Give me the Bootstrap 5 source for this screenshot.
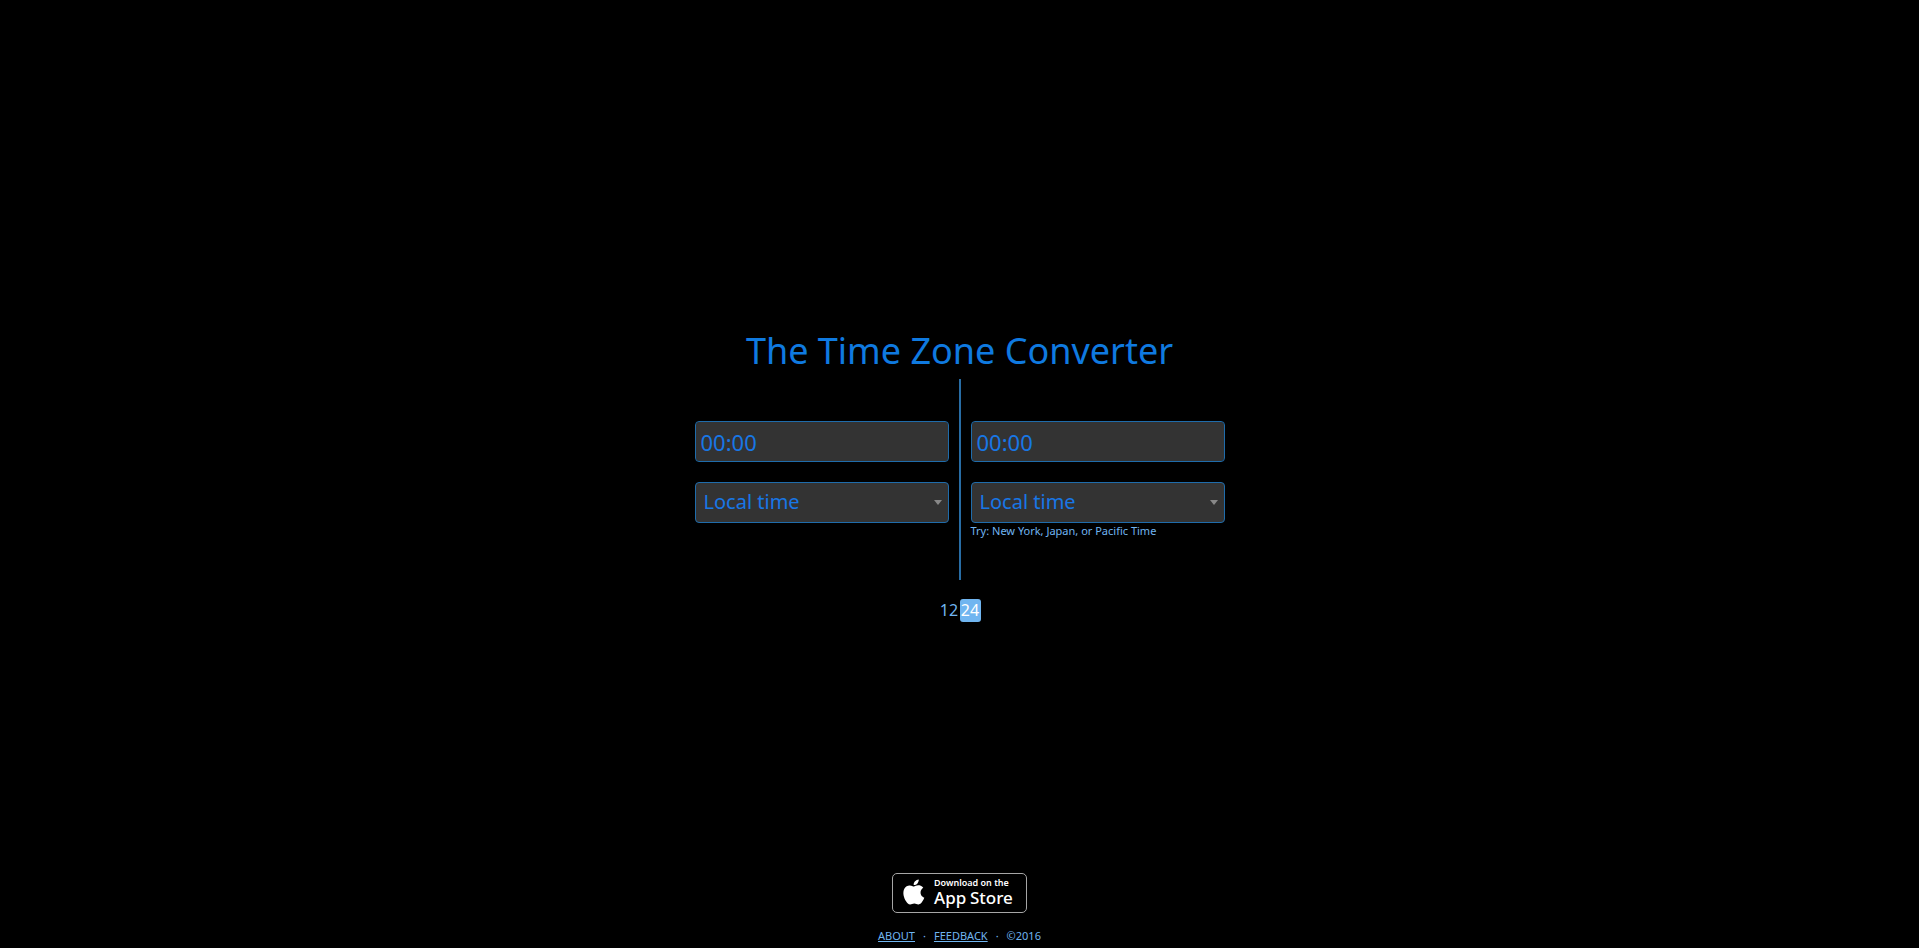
<!DOCTYPE html>
<html lang="en">
<head>
<meta charset="utf-8">
<meta name="viewport" content="width=device-width, initial-scale=1">
<title>The Time Zone Converter</title>
<link rel="stylesheet" href="https://cdn.jsdelivr.net/npm/bootstrap@5.3.0/dist/css/bootstrap.min.css">
<style>
  body { background: #000; color: #70b5f0; font-family: "Noto Sans", sans-serif; }
  .page { grid-template-rows: 1fr auto 1fr; }
  .converter { grid-row: 2; }
  .title { color: #0f7ae0; font-size: 36px; line-height: 47px; padding-bottom: 5px; font-weight: 400; }
  .zones { height: 201px; gap: 10px; }
  .zone { width: 254px; padding-top: 42px; }
  .divider { width: 2px; background: #286da5; }
  .zone .form-control, .zone .form-select {
    height: 41px; background-color: #333; color: #1877e6;
    border: 1px solid #1f6cab; border-radius: 4px;
  }
  .zone .form-control { font-size: 22px; line-height: 30px; padding: 5px 5px 3px; margin-bottom: 20px; }
  .zone .form-select {
    font-size: 20px; line-height: 28px; padding: 5px 28px 5px 8px;
    background-image: url("data:image/svg+xml,%3Csvg xmlns='http://www.w3.org/2000/svg' viewBox='0 0 8 5'%3E%3Cpath d='M0 0h8L4 5z' fill='%23888'/%3E%3C/svg%3E");
    background-size: 8px 5px; background-position: right 6px center;
  }
  .hint { font-size: 11px; line-height: 16px; }
  .format { font-size: 16px; line-height: 22px; margin-top: 19px; }
  .format button { color: #70b5f0; background: none; border: 0; border-radius: 3px; padding: 0 1px; width: 21px; height: 23px; }
  .format .chosen { background: #70b5f0; color: #fff; }
  .foot { grid-row: 3; font-size: 11px; line-height: 16px; padding-bottom: 4px; }
  .foot a { color: inherit; }
  .store { width: 135px; height: 40px; margin-bottom: 15px; }
</style>
</head>
<body>
<div class="page d-grid min-vh-100">
  <main class="converter d-flex flex-column align-items-center">
    <h1 class="title m-0 text-center">The Time Zone Converter</h1>
    <div class="zones d-flex justify-content-center">
      <div class="zone">
        <input class="form-control" type="text" value="00:00" aria-label="Time to convert">
        <select class="form-select" aria-label="From time zone"><option>Local time</option></select>
      </div>
      <div class="divider"></div>
      <div class="zone">
        <input class="form-control" type="text" value="00:00" aria-label="Converted time">
        <select class="form-select" aria-label="To time zone"><option>Local time</option></select>
        <div class="hint">Try: New York, Japan, or Pacific Time</div>
      </div>
    </div>
    <div class="format d-flex justify-content-center">
      <button type="button">12</button>
      <button type="button" class="chosen">24</button>
    </div>
  </main>
  <footer class="foot d-flex flex-column align-items-center justify-content-end">
    <a class="store d-block" href="#" aria-label="Download on the App Store">
      <svg class="d-block" width="135" height="40" viewBox="0 0 135 40">
        <rect x=".5" y=".5" width="134" height="39" rx="4.500" fill="#000" stroke="#a6a6a6"/>
        <path fill="#fff" d="M28.800 19.800c0-2.700 2.200-4 2.300-4.100-1.300-1.800-3.200-2.100-3.900-2.100-1.600-.2-3.200 1-4 1s-2.100-1-3.500-.9c-1.800 0-3.400 1-4.300 2.600-1.900 3.200-.5 8 1.300 10.600.9 1.300 2 2.700 3.400 2.700 1.300-.1 1.900-.9 3.500-.9s2.100.9 3.500.8c1.500 0 2.400-1.300 3.300-2.600 1-1.500 1.500-2.900 1.500-3-.1 0-3.100-1.100-3.100-4.100zM26.200 12c.7-.9 1.200-2.100 1.100-3.300-1.100 0-2.400.7-3.100 1.600-.7.700-1.300 2-1.100 3.100 1.100.1 2.300-.5 3.100-1.400z" transform="translate(-6 -4) scale(1.200)"/>
        <text x="42" y="13" fill="#fff" font-family="Noto Sans, sans-serif" font-size="9" font-weight="600">Download on the</text>
        <text y="31" fill="#fff" font-family="Noto Sans, sans-serif" font-size="17" font-weight="500"><tspan x="42">App</tspan> <tspan x="78">Store</tspan></text>
      </svg>
    </a>
    <div class="d-flex">
      <a href="#">ABOUT</a><span class="mx-1 px-1">·</span><a href="#">FEEDBACK</a><span class="mx-1 px-1">·</span><span>©2016</span>
    </div>
  </footer>
</div>
<script src="https://cdn.jsdelivr.net/npm/bootstrap@5.3.0/dist/js/bootstrap.bundle.min.js"></script>
</body>
</html>
